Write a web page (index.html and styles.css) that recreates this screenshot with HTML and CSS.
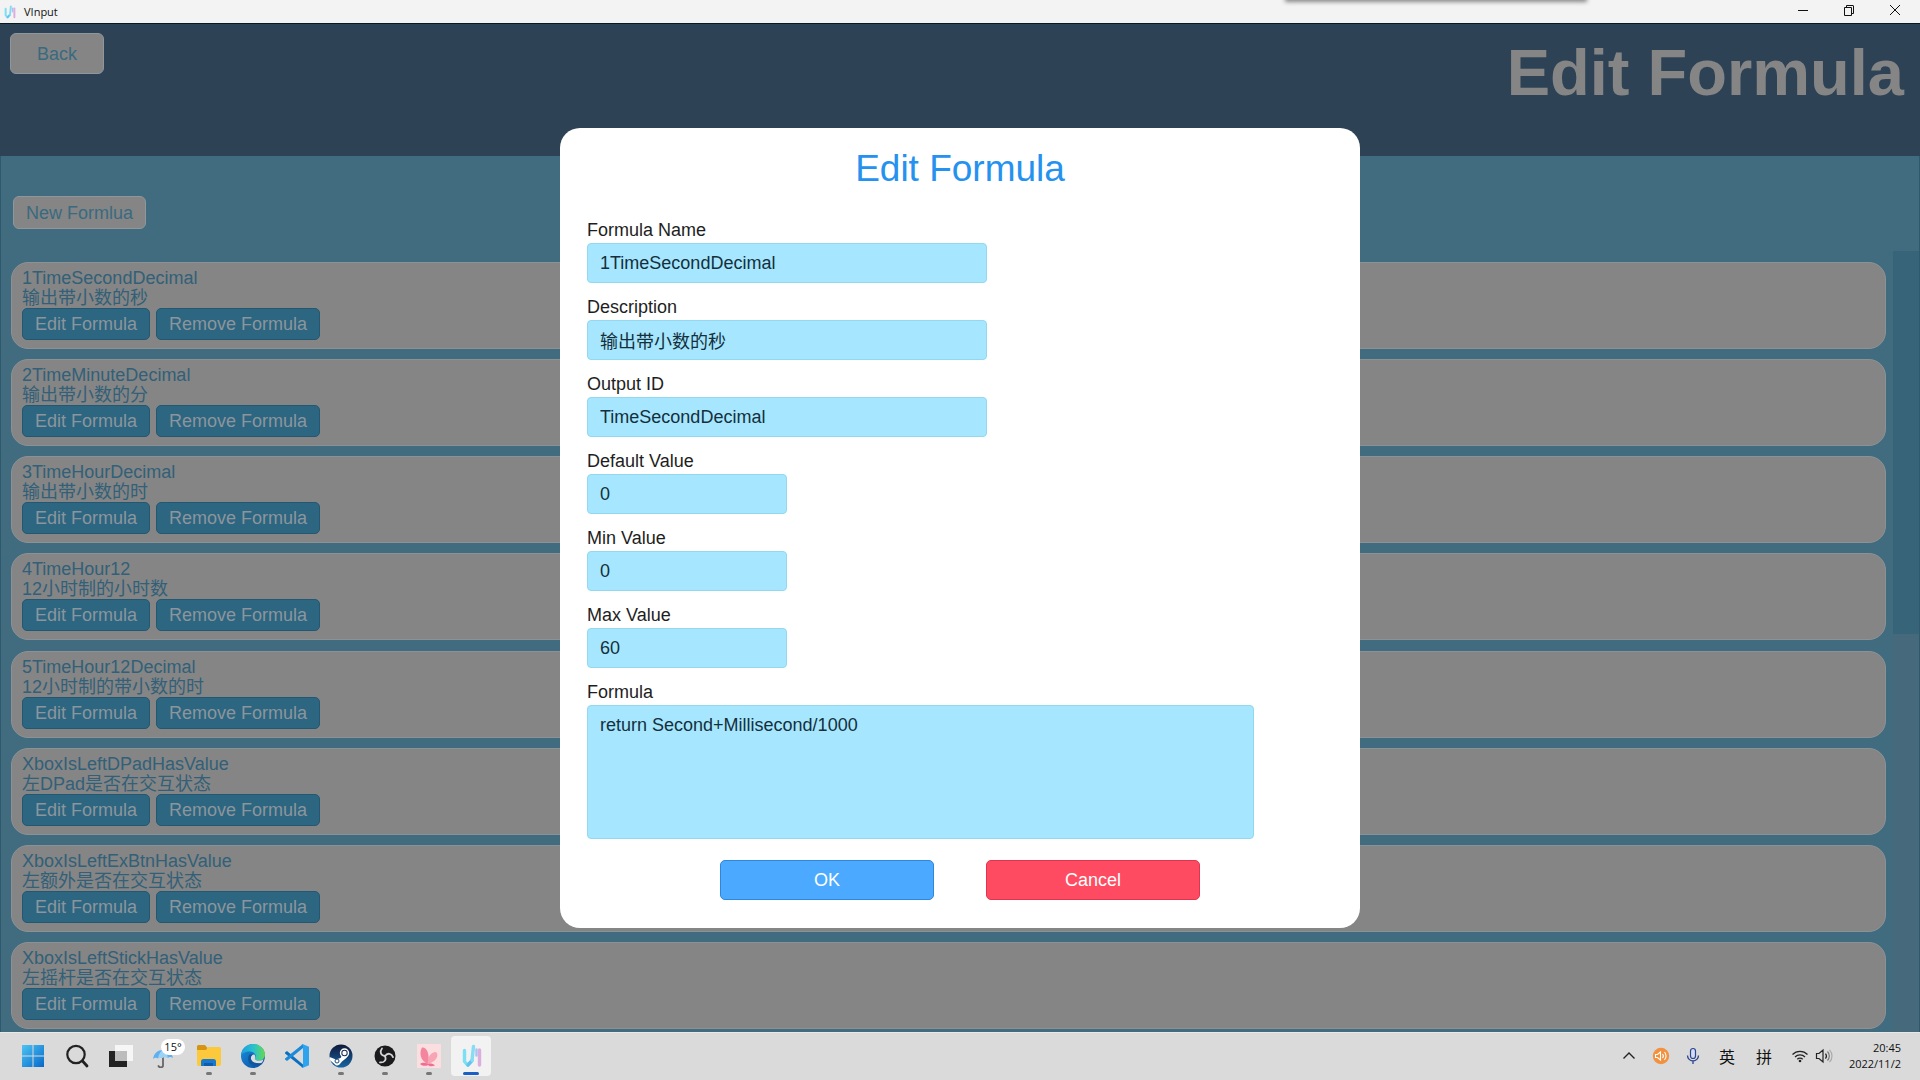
FILE: index.html
```html
<!DOCTYPE html>
<html lang="en">
<head>
<meta charset="utf-8">
<title>VInput</title>
<link rel="stylesheet" href="styles.css">
</head>
<body>
<header class="titlebar">
  <svg class="titlebar-logo" viewBox="0 0 24 24" aria-hidden="true"><use href="#vi-logo"/></svg>
  <span class="titlebar-name">VInput</span>
  <span class="peek" aria-hidden="true"></span>
  <div class="window-controls">
    <button class="window-btn" aria-label="Minimize"><svg viewBox="0 0 12 12"><path d="M1 6.500h10"/></svg></button>
    <button class="window-btn" aria-label="Restore"><svg viewBox="0 0 12 12"><path d="M1.500 3.500h7v8h-7zM3.500 3.500v-2h6.500q.500 0 .500.500v7.500h-2"/></svg></button>
    <button class="window-btn" aria-label="Close"><svg viewBox="0 0 12 12"><path d="M1 1l10 10M11 1L1 11"/></svg></button>
  </div>
</header>

<main class="app">
  <div class="banner">
    <button class="btn-light btn-back">Back</button>
    <h1 class="banner-title">Edit Formula</h1>
  </div>
  <section class="panel">
    <div class="toolbar"><button class="btn-light btn-new">New Formlua</button></div>
    <div class="scroller">
      <ul class="cards">
        <li class="card"><p>1TimeSecondDecimal</p><p>输出带小数的秒</p><div class="card-actions"><button class="btn-card">Edit Formula</button><button class="btn-card">Remove Formula</button></div></li>
        <li class="card"><p>2TimeMinuteDecimal</p><p>输出带小数的分</p><div class="card-actions"><button class="btn-card">Edit Formula</button><button class="btn-card">Remove Formula</button></div></li>
        <li class="card"><p>3TimeHourDecimal</p><p>输出带小数的时</p><div class="card-actions"><button class="btn-card">Edit Formula</button><button class="btn-card">Remove Formula</button></div></li>
        <li class="card"><p>4TimeHour12</p><p>12小时制的小时数</p><div class="card-actions"><button class="btn-card">Edit Formula</button><button class="btn-card">Remove Formula</button></div></li>
        <li class="card"><p>5TimeHour12Decimal</p><p>12小时制的带小数的时</p><div class="card-actions"><button class="btn-card">Edit Formula</button><button class="btn-card">Remove Formula</button></div></li>
        <li class="card"><p>XboxIsLeftDPadHasValue</p><p>左DPad是否在交互状态</p><div class="card-actions"><button class="btn-card">Edit Formula</button><button class="btn-card">Remove Formula</button></div></li>
        <li class="card"><p>XboxIsLeftExBtnHasValue</p><p>左额外是否在交互状态</p><div class="card-actions"><button class="btn-card">Edit Formula</button><button class="btn-card">Remove Formula</button></div></li>
        <li class="card"><p>XboxIsLeftStickHasValue</p><p>左摇杆是否在交互状态</p><div class="card-actions"><button class="btn-card">Edit Formula</button><button class="btn-card">Remove Formula</button></div></li>
      </ul>
      <div class="track"><div class="thumb"></div></div>
    </div>
  </section>

  <div class="overlay">
    <form class="modal" role="dialog" aria-labelledby="dialog-title">
      <h2 class="modal-title" id="dialog-title">Edit Formula</h2>
      <div class="fields">
        <div class="field"><label for="f-name">Formula Name</label><input id="f-name" class="input" type="text" value="1TimeSecondDecimal"></div>
        <div class="field"><label for="f-desc">Description</label><input id="f-desc" class="input" type="text" value="输出带小数的秒"></div>
        <div class="field"><label for="f-out">Output ID</label><input id="f-out" class="input" type="text" value="TimeSecondDecimal"></div>
        <div class="field"><label for="f-def">Default Value</label><input id="f-def" class="input input-short" type="text" value="0"></div>
        <div class="field"><label for="f-min">Min Value</label><input id="f-min" class="input input-short" type="text" value="0"></div>
        <div class="field"><label for="f-max">Max Value</label><input id="f-max" class="input input-short" type="text" value="60"></div>
        <div class="field"><label for="f-formula">Formula</label><textarea id="f-formula" class="input input-area">return Second+Millisecond/1000</textarea></div>
      </div>
      <div class="modal-actions">
        <button type="button" class="btn-modal btn-ok">OK</button>
        <button type="button" class="btn-modal btn-cancel">Cancel</button>
      </div>
    </form>
  </div>
</main>

<footer class="taskbar">
  <nav class="apps" aria-label="Apps">
    <button class="task" aria-label="Start"><svg viewBox="0 0 24 24"><defs><linearGradient id="win" gradientUnits="userSpaceOnUse" x1="0" y1="0" x2="24" y2="24"><stop offset="0" stop-color="#4fc8f5"/><stop offset="1" stop-color="#0464c8"/></linearGradient></defs><path fill="url(#win)" d="M1 1h10.500v10.500H1zM12.500 1H23v10.500H12.500zM1 12.500h10.500V23H1zM12.500 12.500H23V23H12.500z"/></svg></button>
    <button class="task" aria-label="Search"><svg viewBox="0 0 24 24"><circle cx="11" cy="10.500" r="8.700" fill="none" stroke="#222" stroke-width="2.200"/><path d="M17.500 17l4.500 5" stroke="#222" stroke-width="2.800" stroke-linecap="round"/></svg></button>
    <button class="task" aria-label="Task view"><svg viewBox="0 0 24 24"><path fill="#222" d="M0 7h18v16H0z"/><path fill="#f6f6f6" d="M6 1h18v16H6z"/><path fill="#bdbdbd" d="M6 7h12v10H6z"/></svg></button>
    <button class="task" aria-label="Weather"><svg viewBox="0 0 24 24"><path d="M8 12v9a2.500 2.500 0 0 1-4.500 0" transform="translate(2 1)" fill="none" stroke="#666" stroke-width="1.800" stroke-linecap="round"/><path fill="#5fb0ee" d="M0 15C1 9 5 6 10 6s9 3 10 8c-2-1.500-4-1.500-5 0-1.500-1.500-4-1.500-5.500 0-1.500-1.200-3.500-1.200-4.500.500C4 13.500 1.500 13.500 0 15z"/><path fill="#9bd2f8" d="M5 14.500C5.500 10 8 7 10 6c2 1 4.500 4 5 8-1.500-1.500-4-1.500-5.500 0-1.500-1.200-3.500-1.200-4.500.500z"/></svg><span class="badge">15°</span></button>
    <button class="task open" aria-label="File Explorer"><svg viewBox="0 0 24 24"><path fill="#d79413" d="M0 2.500A1.500 1.500 0 0 1 1.500 1H8l2.500 3v4H0z"/><path fill="#fcc93c" d="M0 6h9l2-3h11.500A1.500 1.500 0 0 1 24 4.500V20a2 2 0 0 1-2 2H2a2 2 0 0 1-2-2z"/><path fill="#1a79cf" d="M4 22v-4.500A2.500 2.500 0 0 1 6.500 15h10a2.500 2.500 0 0 1 2.500 2.500V22z"/><path fill="#0f5ca8" d="M7 19h9v3H7z"/></svg></button>
    <button class="task open" aria-label="Edge"><svg viewBox="0 0 24 24"><defs><linearGradient id="e1" x1="0" y1="0" x2="1" y2="0"><stop offset="0" stop-color="#1c9ee0"/><stop offset=".55" stop-color="#2cc3c9"/><stop offset="1" stop-color="#66d94e"/></linearGradient><linearGradient id="e2" x1="0" y1="0" x2="1" y2="1"><stop offset="0" stop-color="#1b8fe0"/><stop offset="1" stop-color="#0b4c9c"/></linearGradient></defs><circle cx="12" cy="12" r="12" fill="url(#e2)"/><path fill="url(#e1)" d="M0 11C1 4 6 0 12 0c7 0 12 5 12 10.500 0 4-3 6-6 6s-4.500-1-4-2.200c.8-1 .9-2 .6-3C14 9 11.500 7.500 8.500 7.500 4.500 7.500 1 9.500 0 11z"/><path fill="#dcdcdc" d="M14 14.300c-.6 1.200 1 2.300 4 2.300 1.800 0 3.500-.8 4.500-1.700-.2 1.500-1 3-2 4-6 2-12-1-10.500-6 .4-1.300 2-2.800 3.500-2.400.8 1.500 1 2.800.500 3.800z"/><path fill="#0f569f" d="M8.500 10.500c-3 4-1 10 4 11 3 .6 6-.6 8.200-2.800C17 20 11 19 10 15c-.5-2 .2-3.500 1.500-4.500-1-.5-2-.5-3 0z"/></svg></button>
    <button class="task" aria-label="VS Code"><svg viewBox="0 0 24 24"><path fill="#0a6fc0" d="M0 8.500L2 7l16 13.500V24L0 9.500z"/><path fill="#1b8ad8" d="M0 15.500L2 17 18 4V0L0 14.500z"/><path fill="#2ea3ee" d="M17.500 0L24 2.800v18.400L17.500 24l-1-1c.8.200 1.500-.3 1.500-1.200V2.200c0-.9-.7-1.400-1.500-1.200z"/></svg></button>
    <button class="task open" aria-label="Steam"><svg viewBox="0 0 24 24"><defs><linearGradient id="st" x1="0" y1="0" x2="0" y2="1"><stop offset="0" stop-color="#10183a"/><stop offset="1" stop-color="#1666a4"/></linearGradient></defs><circle cx="12" cy="12" r="11.500" fill="url(#st)"/><path fill="#fff" d="M.6 13l6.400 2.500 4.500-1.500 3-4 3.500 3.500-5 4-2.500 3a3.500 3.500 0 0 1-5-.5L.8 16z"/><circle cx="15.500" cy="9" r="4.700" fill="#fff"/><circle cx="15.500" cy="9" r="3.200" fill="#1b2c52"/><circle cx="15.500" cy="9" r="2.200" fill="#fff"/><circle cx="8" cy="17" r="2" fill="none" stroke="#1c4a7c"/></svg></button>
    <button class="task open" aria-label="OBS"><svg viewBox="0 0 24 24"><circle cx="12" cy="12" r="10.500" fill="#1b1b1d"/><g fill="none" stroke="#d5d5d5" stroke-width="1.800" stroke-linecap="round"><path id="blade" d="M12 12C7.500 11.500 6.500 7.500 9 4.500"/><use href="#blade" transform="rotate(120 12 12)"/><use href="#blade" transform="rotate(240 12 12)"/></g></svg></button>
    <button class="task open" aria-label="Petal"><svg viewBox="0 0 24 24"><path fill="#fbdfe0" d="M0 0h24v24H0z"/><path fill="#f3859f" d="M11 20C3 17 2 8 5 3.500 10 3 13 10 11 20z"/><path fill="#f7a4b5" d="M11 20c-1-7 3-12 8-12 4 4-1 10-8 12z"/><path fill="#ef6f92" d="M3 20c2-2 6-1.500 8 0 2-1 5-.5 7 1.500-3 1.200-6 1-7-.5-2 1.500-6 1-8-1z"/></svg></button>
    <button class="task current" aria-label="VInput"><svg viewBox="0 0 24 24"><g id="vi-logo" fill="none" stroke-linecap="round" stroke-linejoin="round" stroke-width="3.400"><path d="M4.500 6.500v11l3 3.500" stroke="#7be0f3"/><path d="M8 21l4-4.500" stroke="#62c3ee"/><path d="M13.500 2.500L12 16.500" stroke="#86dcf5"/><path d="M16.500 5.500v6" stroke="#a9c4f0" stroke-width="2.400"/><path d="M19.500 6v15" stroke="#dcaede"/></g></svg></button>
  </nav>
  <div class="tray">
    <button class="tray-btn" aria-label="Hidden icons"><svg viewBox="0 0 18 18"><path d="M3.500 11.500L9 6l5.500 5.500" fill="none" stroke="#222" stroke-width="1.400"/></svg></button>
    <button class="tray-btn" aria-label="Audio"><svg viewBox="0 0 18 18"><circle cx="9" cy="9" r="8.200" fill="#f2923f"/><path d="M3.500 7.500h2L8.500 5v8l-3-2.500h-2zM10.500 7a3 3 0 0 1 0 4M12.500 5.200a5.500 5.500 0 0 1 0 7.600" fill="none" stroke="#fff" stroke-width="1.100"/></svg></button>
    <button class="tray-btn" aria-label="Microphone"><svg viewBox="0 0 18 18"><rect x="6.500" y="1.500" width="5" height="10" rx="2.500" fill="#d5dcf0" stroke="#2b4590" stroke-width="1.200"/><path d="M3.500 8.500a5.500 5.500 0 0 0 11 0M9 14v3" fill="none" stroke="#2b4590" stroke-width="1.300"/></svg></button>
    <button class="ime">英</button>
    <button class="ime">拼</button>
    <button class="status" aria-label="Network and volume">
      <svg viewBox="0 0 18 18"><g fill="none" stroke="#222" stroke-width="1.300"><path d="M1.500 7.500a10.500 10.500 0 0 1 15 0M4 10a7 7 0 0 1 10 0M6.300 12.300a3.800 3.800 0 0 1 5.400 0"/></g><circle cx="9" cy="14" r="1.300" fill="#222"/></svg>
      <svg viewBox="0 0 18 18"><g fill="none" stroke="#222" stroke-width="1.200"><path d="M1.500 6.500H4L8 3v12l-4-3.500H1.500zM10.500 6.500a4 4 0 0 1 0 5"/><path d="M12.500 4.500a6.500 6.500 0 0 1 0 9" stroke="#777"/><path d="M14.500 2.800a9 9 0 0 1 0 12.400" stroke="#aaa"/></g></svg>
    </button>
    <div class="clock"><time>20:45</time><time>2022/11/2</time></div>
  </div>
</footer>
</body>
</html>
```
FILE: styles.css
```css
* { box-sizing: border-box; }

body {
  margin: 0;
  height: 100vh;
  display: flex;
  flex-direction: column;
  overflow: hidden;
  font: 18px/20px "Liberation Sans", "Noto Sans CJK SC", sans-serif;
}

button, input, textarea { font: inherit; }
button { border: 0; padding: 0; background: none; color: inherit; }
h1, h2, p, ul { margin: 0; padding: 0; }

/* Window title bar */
.titlebar {
  position: relative;
  display: flex;
  align-items: center;
  height: 24px;
  padding: 0 2px 0 3px;
  gap: 7px;
  background: #f3f3f3;
  border-bottom: 1px solid #0c1820;
  color: #111;
}
.titlebar-logo { width: 14px; height: 14px; }
.titlebar-name { font: 11px/16px "Open Sans", sans-serif; }
.window-controls { display: flex; margin-left: auto; padding-bottom: 3px; }
.window-btn {
  width: 46px;
  height: 20px;
  display: grid;
  place-items: center;
}
.window-btn svg { width: 12px; height: 12px; fill: none; stroke: #111; }

.peek {
  position: absolute;
  top: -8px;
  left: 67%;
  width: 300px;
  height: 8px;
  box-shadow: 0 1px 4px 1px #888;
}

/* App */
.app {
  position: relative;
  flex: 1;
  min-height: 0;
  display: flex;
  flex-direction: column;
  background: #2e4256;
}
.banner {
  display: flex;
  justify-content: space-between;
  align-items: flex-start;
  height: 132px;
  padding: 9px 16px 0 10px;
}
.banner-title {
  font-size: 65px;
  line-height: 80px;
  color: #858585;
}
.btn-light {
  background: #858585;
  border: 1px solid #8f979c;
  border-radius: 6px;
  color: #396a80;
}
.btn-back { width: 94px; height: 41px; }
.btn-new { height: 33px; padding: 0 12px; }

.panel {
  flex: 1;
  min-height: 0;
  display: flex;
  flex-direction: column;
  background: #416c7f;
  border-left: 1px solid #2f5a6d;
  border-right: 1px solid #2f5a6d;
}
.toolbar { padding: 40px 12px 22px; }
.scroller { flex: 1; min-height: 0; display: flex; }
.cards {
  flex: 1;
  display: flex;
  flex-direction: column;
  justify-content: space-between;
  gap: 10px;
  padding: 11px 7px 3px 10px;
  list-style: none;
  overflow: hidden;
}
.card {
  flex: none;
  height: 87px;
  padding: 5px 10px;
  background: #858585;
  border: 1px solid #8b9296;
  border-radius: 17px;
  color: #316078;
}
.card-actions { display: flex; gap: 6px; }
.btn-card {
  height: 32px;
  padding: 0 12px;
  background: #2d6681;
  border: 1px solid #245872;
  border-radius: 5px;
  color: #8c959c;
}
.track { width: 26px; background: #46697c; }
.thumb { height: 49%; background: #38647a; }

/* Dialog */
.overlay {
  position: absolute;
  inset: 0;
  display: grid;
  place-items: center;
}
.modal {
  width: 800px;
  max-width: 100%;
  padding: 19px 27px 28px;
  background: #fff;
  border-radius: 20px;
}
.modal-title {
  margin-bottom: 29px;
  font-size: 37px;
  line-height: 44px;
  font-weight: 400;
  text-align: center;
  color: #2492ee;
}
.fields { display: flex; flex-direction: column; gap: 14px; }
.field {
  display: flex;
  flex-direction: column;
  align-items: flex-start;
  gap: 3px;
  color: #1e1e1e;
}
.input {
  width: 400px;
  height: 40px;
  padding: 0 12px;
  background: #a6e7ff;
  border: 1px solid #92d9f0;
  border-radius: 4px;
  color: #14303c;
}
.input-short { width: 200px; }
.input-area {
  width: 667px;
  height: 134px;
  padding: 9px 12px;
  resize: none;
}
.modal-actions {
  display: flex;
  justify-content: center;
  gap: 52px;
  margin-top: 21px;
}
.btn-modal {
  width: 214px;
  height: 40px;
  border-radius: 5px;
  color: #fff;
}
.btn-ok { background: #4baaff; border: 1px solid #2f87d8; }
.btn-cancel { background: #ff4b61; border: 1px solid #e0354e; }

/* Taskbar */
.taskbar {
  display: flex;
  justify-content: space-between;
  align-items: center;
  height: 48px;
  padding: 0 19px 2px 11px;
  background: #dadada;
  border-top: 1px solid #e8e8e8;
}
.apps { display: flex; gap: 4px; }
.task {
  position: relative;
  width: 40px;
  height: 40px;
  padding-left: 4px;
  border-radius: 4px;
  display: grid;
  place-items: center;
}
.task svg { width: 24px; height: 24px; }
.open::after, .current::after {
  content: "";
  position: absolute;
  bottom: 1px;
  left: 19px;
  width: 6px;
  height: 3px;
  border-radius: 2px;
  background: #777;
}
.current { background: #f2f2f2; padding: 0 0 0 1px; }
.current::after { left: 12px; width: 16px; background: #1a5fc4; }
.badge {
  position: absolute;
  top: 3px;
  left: 18px;
  width: 24px;
  border-radius: 8px;
  background: #fff;
  font: 11px/16px "Open Sans", sans-serif;
  text-align: center;
  color: #111;
}
.tray { display: flex; align-items: center; color: #111; }
.tray-btn { width: 32px; height: 40px; display: grid; place-items: center; }
.tray svg { width: 18px; height: 18px; display: block; }
.ime { width: 38px; font: 16px/20px "Noto Sans CJK SC", sans-serif; }
.tray-btn + .ime { width: 36px; }
.status { display: flex; gap: 6px; padding: 0 8px; }
.clock {
  display: flex;
  flex-direction: column;
  min-width: 60px;
  text-align: right;
  font: 11px/16px "Open Sans", sans-serif;
}
```
